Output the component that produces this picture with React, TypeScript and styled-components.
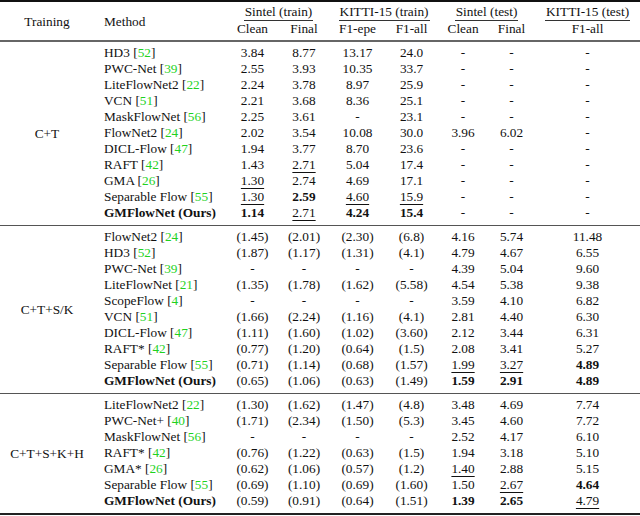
import React from "react";
import styled, { createGlobalStyle } from "styled-components";

const Global = createGlobalStyle`
  html, body { margin: 0; padding: 0; background: #fff; }
  body { font-family: "Liberation Serif", "Times New Roman", serif; color: #111; }
`;

const Table = styled.table`
  width: 640px;
  table-layout: fixed;
  border-collapse: collapse;
  font-family: "Liberation Serif", "Times New Roman", serif;
  font-size: 13.3px;
  line-height: 16px;
  color: #111;
  border-top: 2px solid #111;
  border-bottom: 2px solid #222;
`;

const HeadCell = styled.th<{ $first?: boolean; $last?: boolean }>`
  font-weight: normal;
  text-align: center;
  padding: ${(p) => (p.$first ? "2px 0 0" : p.$last ? "0 0 3px" : "0")};
  white-space: nowrap;
  vertical-align: middle;
`;

const MethodHead = styled(HeadCell)`
  text-align: left;
  padding-left: 10px;
`;

const GroupLabel = styled.span`
  display: inline-block;
  border-bottom: 1px solid #333;
  padding: 0 1px;
`;

const THead = styled.thead`
  border-bottom: 2px solid #666;
`;

const Body = styled.tbody`
  & + & { border-top: 1px solid #555; }
`;

const Cell = styled.td<{ $first?: boolean; $last?: boolean }>`
  text-align: center;
  white-space: nowrap;
  padding: ${(p) => (p.$first ? "3px" : "0")} 0 ${(p) => (p.$last ? "4px" : "0")};
`;

const MethodCell = styled(Cell)`
  text-align: left;
  padding-left: 10px;
`;

const TrainCell = styled.td`
  text-align: center;
  vertical-align: middle;
  white-space: nowrap;
`;

const Ref = styled.span`
  color: #1fd21f;
`;

const Bold = styled.b`
  font-weight: bold;
`;

const Under = styled.span`
  text-decoration: underline;
  text-decoration-thickness: 1px;
  text-underline-offset: 3px;
`;

type Row = { name: string; ref?: string; ours?: boolean; vals: string[] };
type Group = { label: string; rows: Row[] };

const D = ["-", "-", "-"];

const groups: Group[] = [
  {
    label: "C+T",
    rows: [
      { name: "HD3", ref: "52", vals: ["3.84", "8.77", "13.17", "24.0", ...D] },
      { name: "PWC-Net", ref: "39", vals: ["2.55", "3.93", "10.35", "33.7", ...D] },
      { name: "LiteFlowNet2", ref: "22", vals: ["2.24", "3.78", "8.97", "25.9", ...D] },
      { name: "VCN", ref: "51", vals: ["2.21", "3.68", "8.36", "25.1", ...D] },
      { name: "MaskFlowNet", ref: "56", vals: ["2.25", "3.61", "-", "23.1", ...D] },
      { name: "FlowNet2", ref: "24", vals: ["2.02", "3.54", "10.08", "30.0", "3.96", "6.02", "-"] },
      { name: "DICL-Flow", ref: "47", vals: ["1.94", "3.77", "8.70", "23.6", ...D] },
      { name: "RAFT", ref: "42", vals: ["1.43", "_2.71", "5.04", "17.4", ...D] },
      { name: "GMA", ref: "26", vals: ["_1.30", "2.74", "4.69", "17.1", ...D] },
      { name: "Separable Flow", ref: "55", vals: ["_1.30", "*2.59", "_4.60", "_15.9", ...D] },
      { name: "GMFlowNet (Ours)", ours: true, vals: ["*1.14", "_2.71", "*4.24", "*15.4", ...D] },
    ],
  },
  {
    label: "C+T+S/K",
    rows: [
      { name: "FlowNet2", ref: "24", vals: ["(1.45)", "(2.01)", "(2.30)", "(6.8)", "4.16", "5.74", "11.48"] },
      { name: "HD3", ref: "52", vals: ["(1.87)", "(1.17)", "(1.31)", "(4.1)", "4.79", "4.67", "6.55"] },
      { name: "PWC-Net", ref: "39", vals: ["-", "-", "-", "-", "4.39", "5.04", "9.60"] },
      { name: "LiteFlowNet", ref: "21", vals: ["(1.35)", "(1.78)", "(1.62)", "(5.58)", "4.54", "5.38", "9.38"] },
      { name: "ScopeFlow", ref: "4", vals: ["-", "-", "-", "-", "3.59", "4.10", "6.82"] },
      { name: "VCN", ref: "51", vals: ["(1.66)", "(2.24)", "(1.16)", "(4.1)", "2.81", "4.40", "6.30"] },
      { name: "DICL-Flow", ref: "47", vals: ["(1.11)", "(1.60)", "(1.02)", "(3.60)", "2.12", "3.44", "6.31"] },
      { name: "RAFT*", ref: "42", vals: ["(0.77)", "(1.20)", "(0.64)", "(1.5)", "2.08", "3.41", "5.27"] },
      { name: "Separable Flow", ref: "55", vals: ["(0.71)", "(1.14)", "(0.68)", "(1.57)", "_1.99", "_3.27", "*4.89"] },
      { name: "GMFlowNet (Ours)", ours: true, vals: ["(0.65)", "(1.06)", "(0.63)", "(1.49)", "*1.59", "*2.91", "*4.89"] },
    ],
  },
  {
    label: "C+T+S+K+H",
    rows: [
      { name: "LiteFlowNet2", ref: "22", vals: ["(1.30)", "(1.62)", "(1.47)", "(4.8)", "3.48", "4.69", "7.74"] },
      { name: "PWC-Net+", ref: "40", vals: ["(1.71)", "(2.34)", "(1.50)", "(5.3)", "3.45", "4.60", "7.72"] },
      { name: "MaskFlowNet", ref: "56", vals: ["-", "-", "-", "-", "2.52", "4.17", "6.10"] },
      { name: "RAFT*", ref: "42", vals: ["(0.76)", "(1.22)", "(0.63)", "(1.5)", "1.94", "3.18", "5.10"] },
      { name: "GMA*", ref: "26", vals: ["(0.62)", "(1.06)", "(0.57)", "(1.2)", "_1.40", "2.88", "5.15"] },
      { name: "Separable Flow", ref: "55", vals: ["(0.69)", "(1.10)", "(0.69)", "(1.60)", "1.50", "_2.67", "*4.64"] },
      { name: "GMFlowNet (Ours)", ours: true, vals: ["(0.59)", "(0.91)", "(0.64)", "(1.51)", "*1.39", "*2.65", "_4.79"] },
    ],
  },
];

const widths = [94, 133, 51, 52, 55, 53, 50, 47, 105];

function Value({ v }: { v: string }) {
  if (v.startsWith("*")) return <Bold>{v.slice(1)}</Bold>;
  if (v.startsWith("_")) return <Under>{v.slice(1)}</Under>;
  return <>{v}</>;
}

export default function App() {
  return (
    <>
      <Global />
      <Table>
        <colgroup>
          {widths.map((w, i) => (
            <col key={i} style={{ width: w }} />
          ))}
        </colgroup>
        <THead>
          <tr>
            <HeadCell rowSpan={2} $first>Training</HeadCell>
            <MethodHead rowSpan={2} $first>Method</MethodHead>
            <HeadCell colSpan={2} $first><GroupLabel>Sintel (train)</GroupLabel></HeadCell>
            <HeadCell colSpan={2} $first><GroupLabel>KITTI-15 (train)</GroupLabel></HeadCell>
            <HeadCell colSpan={2} $first><GroupLabel>Sintel (test)</GroupLabel></HeadCell>
            <HeadCell $first><GroupLabel>KITTI-15 (test)</GroupLabel></HeadCell>
          </tr>
          <tr>
            <HeadCell $last>Clean</HeadCell>
            <HeadCell $last>Final</HeadCell>
            <HeadCell $last>F1-epe</HeadCell>
            <HeadCell $last>F1-all</HeadCell>
            <HeadCell $last>Clean</HeadCell>
            <HeadCell $last>Final</HeadCell>
            <HeadCell $last>F1-all</HeadCell>
          </tr>
        </THead>
        {groups.map((g) => (
          <Body key={g.label}>
            {g.rows.map((r, i) => {
              const first = i === 0;
              const last = i === g.rows.length - 1;
              return (
                <tr key={i}>
                  {first && <TrainCell rowSpan={g.rows.length}>{g.label}</TrainCell>}
                  <MethodCell $first={first} $last={last}>
                    {r.ours ? (
                      <Bold>{r.name}</Bold>
                    ) : (
                      <>
                        {r.name} [<Ref>{r.ref}</Ref>]
                      </>
                    )}
                  </MethodCell>
                  {r.vals.map((v, j) => (
                    <Cell key={j} $first={first} $last={last}>
                      <Value v={v} />
                    </Cell>
                  ))}
                </tr>
              );
            })}
          </Body>
        ))}
      </Table>
    </>
  );
}
